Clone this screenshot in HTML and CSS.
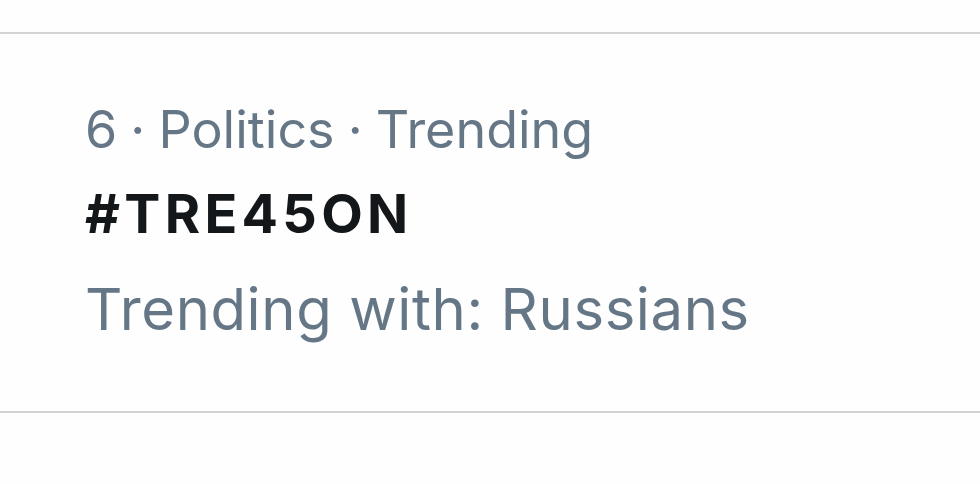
FILE: index.html
```html
<!DOCTYPE html>
<html lang="en">
<head>
<meta charset="utf-8">
<title>Trending</title>
<link rel="stylesheet" href="styles.css">
</head>
<body>
<div class="list">
  <div class="trend">
    <div class="meta">6 · Politics · Trending</div>
    <div class="tag">#TRE45ON</div>
    <div class="with">Trending with: Russians</div>
  </div>
</div>
</body>
</html>
```

FILE: styles.css
```css
html, body {
  margin: 0;
  padding: 0;
  background: #fefefe;
}
body {
  font-family: Inter, "Noto Sans", sans-serif;
  width: 980px;
  height: 484px;
  overflow: hidden;
}
.list {
  padding-top: 32px;
}
.trend {
  border-top: 2px solid #d3d3d3;
  border-bottom: 2px solid #d3d3d3;
  padding: 65px 0 67px 85px;
  display: flex;
  flex-direction: column;
}
.meta {
  font-size: 52px;
  line-height: 62px;
  word-spacing: -1.5px;
  color: #657786;
}
.tag {
  margin-top: 22px;
  font-size: 54px;
  line-height: 62px;
  font-weight: 700;
  letter-spacing: 4.3px;
  color: #14171a;
}
.with {
  margin-top: 29px;
  font-size: 58px;
  line-height: 70px;
  letter-spacing: 0.6px;
  color: #657786;
}
```
